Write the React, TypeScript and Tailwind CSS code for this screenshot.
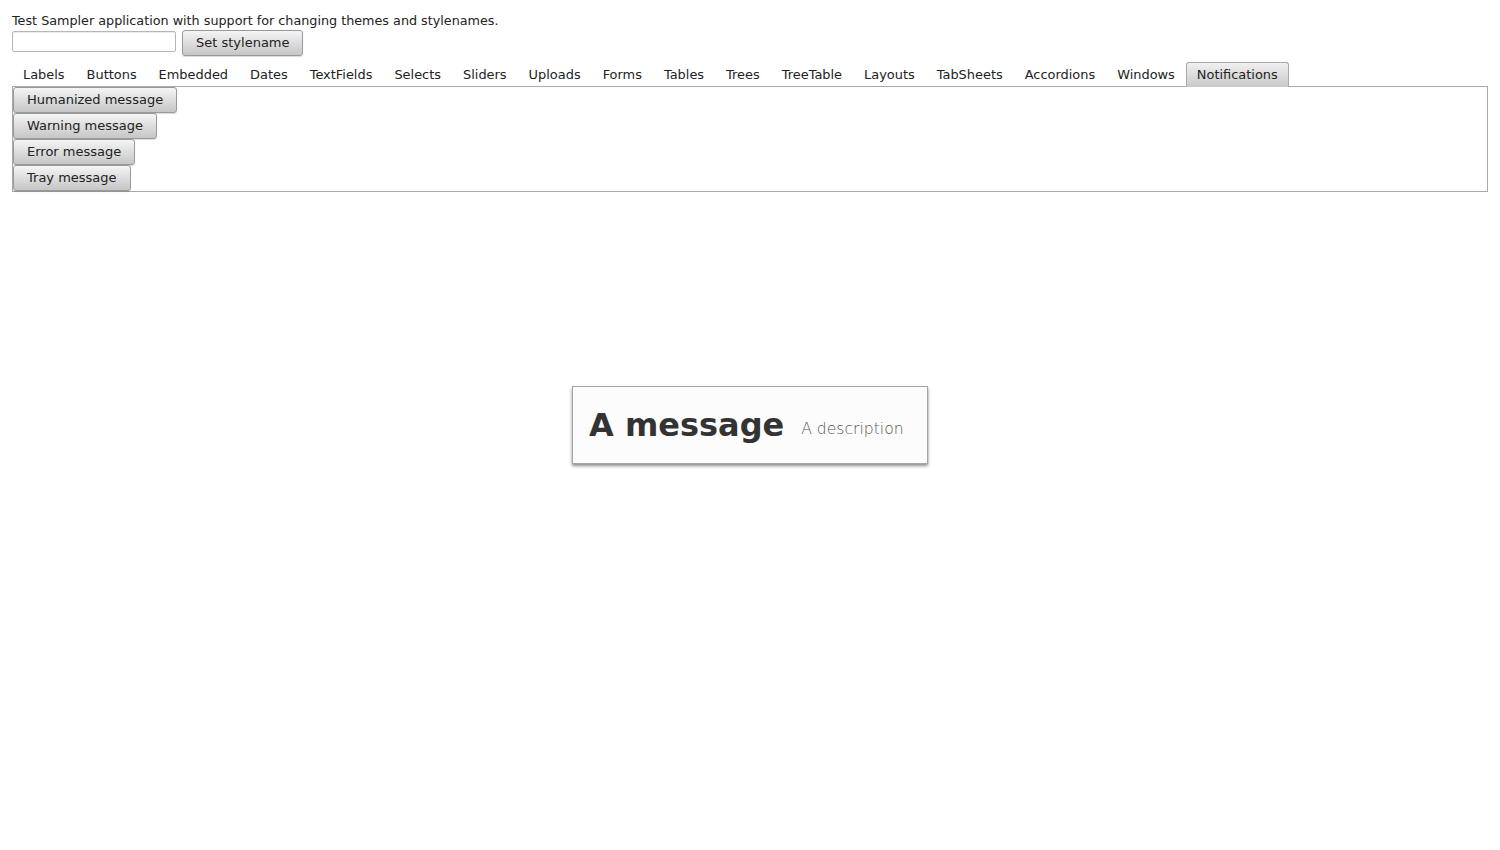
import React from 'react';

const TABS = ['Labels', 'Buttons', 'Embedded', 'Dates', 'TextFields', 'Selects', 'Sliders', 'Uploads', 'Forms', 'Tables', 'Trees', 'TreeTable', 'Layouts', 'TabSheets', 'Accordions', 'Windows', 'Notifications'];
const BUTTONS = ['Humanized message', 'Warning message', 'Error message', 'Tray message'];

const BTN = 'h-[26px] px-[13px] pb-[2px] whitespace-nowrap rounded-[3px] border border-[#9a9a9a] bg-gradient-to-b from-[#f5f5f5] to-[#c6c6c6] text-[13px] text-[#222] leading-none shadow-[0_1px_1px_rgba(0,0,0,0.15)]';

export default function App() {
  const active = 'Notifications';
  return (
    <div className="min-h-[850px] bg-white text-[#222] font-['DejaVu_Sans',sans-serif] text-[13px] relative">
      <div className="px-3 pt-[13px]">
        <div className="leading-[16px] text-[12.75px]">Test Sampler application with support for changing themes and stylenames.</div>
        <div className="flex items-start gap-[6px] mt-[1px]">
          <input className="mt-[1px] w-[164px] h-[21px] border border-[#b6b6b6] rounded-[2px] bg-white outline-none shadow-[inset_0_1px_1px_rgba(0,0,0,0.08)]" />
          <button className={BTN + ' w-[121px] px-0 h-[25px]'}>Set stylename</button>
        </div>

        <div className="mt-[6px]">
          <div className="flex h-[24px] items-end text-[12.93px]">
            {TABS.map((t) =>
              t === active ? (
                <div key={t} className="h-[25px] px-[10px] -mb-px z-10 flex items-center rounded-t-[3px] border border-b-0 border-[#aaa] bg-gradient-to-b from-[#f0f0f0] to-[#c9c9c9]">{t}</div>
              ) : (
                <div key={t} className="h-[24px] pt-px px-[11px] flex items-center">{t}</div>
              )
            )}
          </div>
          <div className="border border-[#aaa] h-[106px] flex flex-col items-start">
            {BUTTONS.map((b) => (
              <button key={b} className={BTN}>{b}</button>
            ))}
          </div>
        </div>
      </div>

      <div className="absolute left-[572px] top-[386px] w-[356px] h-[78px] bg-[#fcfcfc] border border-[#a5a5a5] shadow-[0_2px_3px_rgba(0,0,0,0.45)] flex items-center pl-[16px]">
        <span className="font-bold text-[32px] text-[#333] leading-none">A message</span>
        <span className="ml-[17px] mt-[9px] text-[15.6px] font-light text-[#555]">A description</span>
      </div>
    </div>
  );
}
